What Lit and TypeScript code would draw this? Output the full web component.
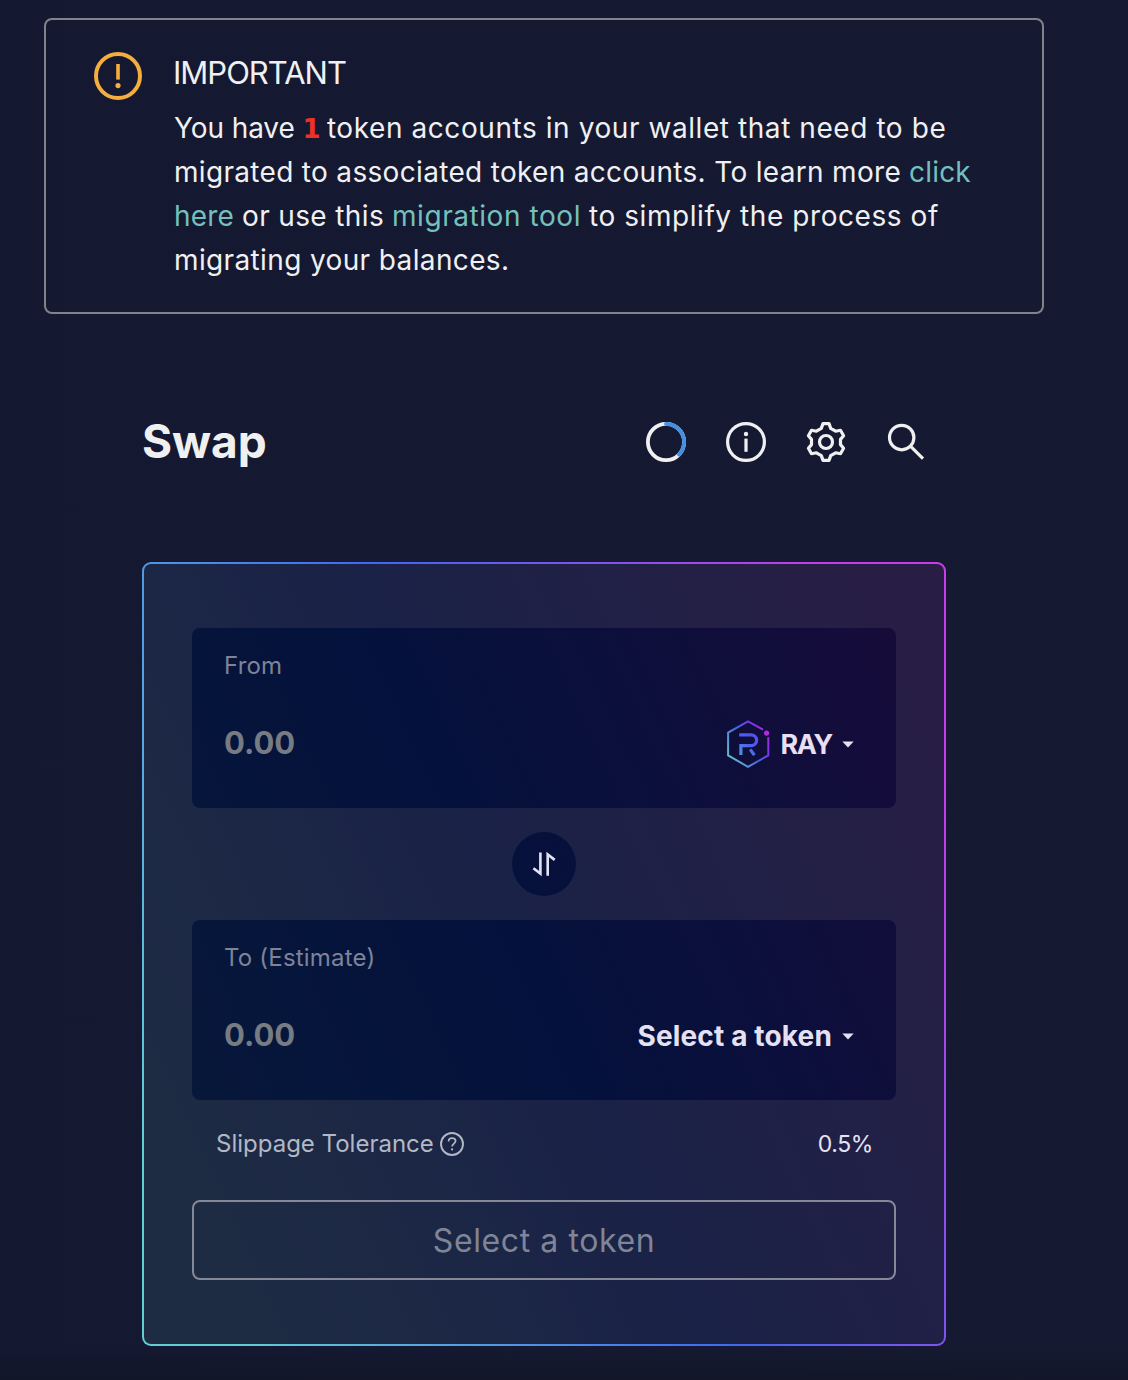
import { LitElement, html, css, svg } from "lit";
import { customElement, property } from "lit/decorators.js";

const caret = html`<svg class="caret" viewBox="0 0 12 7"><path d="M.3.4h11.4L6 6.6z" fill="currentColor" /></svg>`;

const rayLogo = svg`
  <svg class="logo" viewBox="0 0 48 48" fill="none">
    <defs>
      <linearGradient id="g" gradientUnits="userSpaceOnUse" x1="45" y1="10" x2="3" y2="36">
        <stop offset="0" stop-color="#b52ae0" />
        <stop offset=".25" stop-color="#7a35ea" />
        <stop offset=".5" stop-color="#4560e6" />
        <stop offset="1" stop-color="#66bfc9" />
      </linearGradient>
      <linearGradient id="r" gradientUnits="userSpaceOnUse" x1="32" y1="14" x2="15" y2="32">
        <stop offset="0" stop-color="#5a4cf0" />
        <stop offset=".5" stop-color="#4a60ee" />
        <stop offset="1" stop-color="#4f8de0" />
      </linearGradient>
    </defs>
    <path d="M39 9.7 24 1.3 4.1 12.6v22.8L24 46.8l20.3-11.4V17.2" stroke="url(#g)" stroke-width="2" />
    <circle cx="42.6" cy="13.1" r="2.6" fill="#b02be0" />
    <path d="M15.2 14.9h12a5.4 5.4 0 0 1 0 10.8h-10.3v9.2M26.2 29.4l4.2 5.7" stroke="url(#r)" stroke-width="3.2" />
  </svg>`;

@customElement("token-field")
class TokenField extends LitElement {
  @property() label = "";
  @property() token = "";
  @property({ type: Boolean }) logo = false;

  static styles = css`
    :host {
      display: block;
      box-sizing: border-box;
      height: 180px;
      padding: 22px 42px 0 32px;
      border-radius: 8px;
      overflow: hidden;
    }
    .label {
      font-size: 24px;
      line-height: 32px;
      letter-spacing: 0.2px;
      color: #7e8397;
    }
    .row {
      display: flex;
      align-items: center;
      height: 48px;
      margin-top: 38px;
      font-weight: 700;
    }
    .amount {
      flex: 1;
      padding-bottom: 3px;
      font-size: 31px;
      line-height: 45px;
      color: #777b82;
    }
    .token {
      padding-top: 1px;
      font-size: 28px;
      line-height: 47px;
      letter-spacing: 0.15px;
      color: #e4e1f3;
    }
    .ray {
      font-size: 27px;
      letter-spacing: -1.3px;
      margin-left: 8px;
      color: #e8dff2;
    }
    .logo {
      width: 48px;
      height: 48px;
    }
    .caret {
      width: 12px;
      height: 7px;
      margin-left: 10px;
      color: #e4e1f3;
    }
  `;

  render() {
    return html`
      <div class="label">${this.label}</div>
      <div class="row">
        <span class="amount">0.00</span>
        ${this.logo ? rayLogo : ""}
        <span class="token ${this.logo ? "ray" : ""}">${this.token}</span>
        ${caret}
      </div>
    `;
  }
}

@customElement("app-root")
class AppRoot extends LitElement {
  static styles = css`
    :host {
      display: block;
      box-sizing: border-box;
      height: 1380px;
      overflow: hidden;
      padding: 18px 84px 0 44px;
      background: linear-gradient(to bottom, rgba(18, 22, 40, 0) 1345px, rgba(18, 22, 40, 0.9) 1380px),
        linear-gradient(to right, #141831, #151a32);
      font-family: Inter, "Liberation Sans", sans-serif;
      color: #f0f0f1;
    }
    svg {
      display: block;
      flex: none;
    }
    .alert {
      box-sizing: border-box;
      display: flex;
      height: 296px;
      padding: 31px 48px 0;
      border: 2px solid #818389;
      border-radius: 8px;
    }
    .warn {
      width: 48px;
      height: 48px;
      margin: 1px 32px 0 0;
    }
    .title {
      font-size: 31px;
      line-height: 44px;
      letter-spacing: -1px;
      margin: 0 0 11px -1px;
    }
    .line {
      font-size: 28px;
      line-height: 44px;
      white-space: pre;
    }
    .a { letter-spacing: -0.1px; }
    .b { letter-spacing: 0.57px; }
    .c { letter-spacing: 0.32px; }
    .d { letter-spacing: 0.2px; }
    .e { letter-spacing: 0.37px; }
    .link { color: #74c0bc; }
    .count {
      font-family: "DejaVu Sans", sans-serif;
      font-weight: 700;
      font-size: 26px;
      line-height: 1;
      letter-spacing: -1.5px;
      color: #ee3124;
    }
    .swap {
      width: 804px;
      margin: 98px 0 0 98px;
    }
    .head {
      display: flex;
      align-items: center;
      height: 60px;
      padding-right: 20px;
      gap: 40px;
    }
    .name {
      flex: 1;
      margin: 0;
      padding-bottom: 2px;
      font-size: 46px;
      line-height: 58px;
      font-weight: 700;
    }
    .icon {
      width: 40px;
      height: 40px;
    }
    .panel {
      box-sizing: border-box;
      height: 784px;
      margin-top: 90px;
      padding: 64px 48px;
      border: 2px solid transparent;
      border-radius: 9px;
      background: linear-gradient(245.22deg, #281e45 8%, #1a2247 52%, #1e2c43 92%) padding-box,
        linear-gradient(245.22deg, #cc3be8 8%, #4068f2 49%, #64cdd4 92%) border-box;
    }
    .deep {
      background-image: linear-gradient(245.22deg, #160c3a 8%, #04113c 52%, #08193a 92%);
      background-size: 804px 784px;
      background-repeat: no-repeat;
    }
    .from { background-position: -50px -66px; }
    .to { background-position: -50px -358px; }
    .flip {
      width: 64px;
      height: 64px;
      margin: 24px auto;
      border-radius: 50%;
      background-position: -370px -270px;
    }
    .slip {
      display: flex;
      align-items: center;
      height: 40px;
      margin: 24px 23px 36px 24px;
      font-size: 24px;
      line-height: 40px;
      color: #b2b8c6;
    }
    .help {
      width: 24px;
      height: 24px;
      margin-left: 6px;
    }
    .pct {
      margin-left: auto;
      font-size: 23px;
      letter-spacing: -0.4px;
      color: #e4e3f2;
    }
    .submit {
      display: block;
      box-sizing: border-box;
      width: 100%;
      height: 80px;
      padding: 1px 0 0;
      border: 2px solid #858897;
      border-radius: 8px;
      background: none;
      font: 400 32px/75px Inter, "Liberation Sans", sans-serif;
      letter-spacing: 0.6px;
      color: #7f8596;
    }
  `;

  render() {
    return html`
      <section class="alert">
        <svg class="warn" viewBox="0 0 48 48" fill="none" stroke="#f4ae3d">
          <circle cx="24" cy="24" r="22" stroke-width="4" />
          <path d="M24 12v15.6" stroke-width="3.6" />
          <circle cx="24" cy="33.6" r="2.6" fill="#f4ae3d" stroke="none" />
        </svg>
        <div>
          <div class="title">IMPORTANT</div>
          <div class="line"><span class="a">You have </span><span class="count">1</span> <span class="b">token accounts in your wallet that need to be</span></div>
          <div class="line"><span class="c">migrated to associated token accounts. To learn more</span> <span class="link d">click</span></div>
          <div class="line"><span class="link d">here</span> <span class="e">or use this</span> <span class="link b">migration tool</span> <span class="b">to simplify the process of</span></div>
          <div class="line"><span class="e">migrating your balances.</span></div>
        </div>
      </section>

      <main class="swap">
        <header class="head">
          <h1 class="name">Swap</h1>
          <svg class="icon" viewBox="0 0 40 40" fill="none" stroke-width="3.8">
            <circle cx="20" cy="20" r="18.1" stroke="#f0f0f1" />
            <path d="M20 1.9A18.1 18.1 0 0 1 33 32.6" stroke="#438fe4" stroke-linecap="round" />
          </svg>
          <svg class="icon" viewBox="0 0 40 40" fill="none" stroke="#f0f0f1" stroke-width="3.2">
            <circle cx="20" cy="20" r="18.4" />
            <path d="M20 16.6v13.2" />
            <circle cx="20" cy="12" r="2.2" fill="#f0f0f1" stroke="none" />
          </svg>
          <svg class="icon" viewBox="0 0 40 40" fill="none" stroke="#f0f0f1" stroke-width="3.2" stroke-linejoin="round">
            <path d="M17 1.6h6l1.7 4.8 4.9 2.8 4.9-.9 3.1 5.4-3.1 3.7v5.2l3.1 3.7-3.1 5.4-4.9-.9-4.9 2.8-1.7 4.8h-6l-1.7-4.8-4.9-2.8-4.9.9-3.1-5.4 3.1-3.7v-5.2l-3.1-3.7 3.1-5.4 4.9.9 4.9-2.8z" />
            <circle cx="20" cy="20" r="6.5" />
          </svg>
          <svg class="icon" viewBox="0 0 40 40" fill="none" stroke="#f0f0f1" stroke-width="3.2">
            <circle cx="15.7" cy="15.6" r="12.2" />
            <path d="M24.4 24.2 37 36.6" />
          </svg>
        </header>

        <section class="panel">
          <token-field class="deep from" label="From" token="RAY" logo></token-field>
          <div class="flip deep">
            <svg viewBox="0 0 64 64" fill="none" stroke="#e2e3f3" stroke-width="2.6">
              <path d="M28.4 20.4v21.2l-7-5.4M35.7 43.7V22.5l7 5.4" />
            </svg>
          </div>
          <token-field class="deep to" label="To (Estimate)" token="Select a token"></token-field>
          <div class="slip">
            <span>Slippage Tolerance</span>
            <svg class="help" viewBox="0 0 24 24" fill="none" stroke="#b2b8c6">
              <circle cx="12" cy="12" r="11" stroke-width="1.9" />
              <path d="M8.6 9.4c0-2 1.5-3.3 3.5-3.3s3.5 1.2 3.5 3c0 2.4-3.5 2.6-3.5 5.4" stroke-width="1.7" />
              <circle cx="12.1" cy="17.4" r="1.1" fill="#b2b8c6" stroke="none" />
            </svg>
            <span class="pct">0.5%</span>
          </div>
          <button class="submit">Select a token</button>
        </section>
      </main>
    `;
  }
}
